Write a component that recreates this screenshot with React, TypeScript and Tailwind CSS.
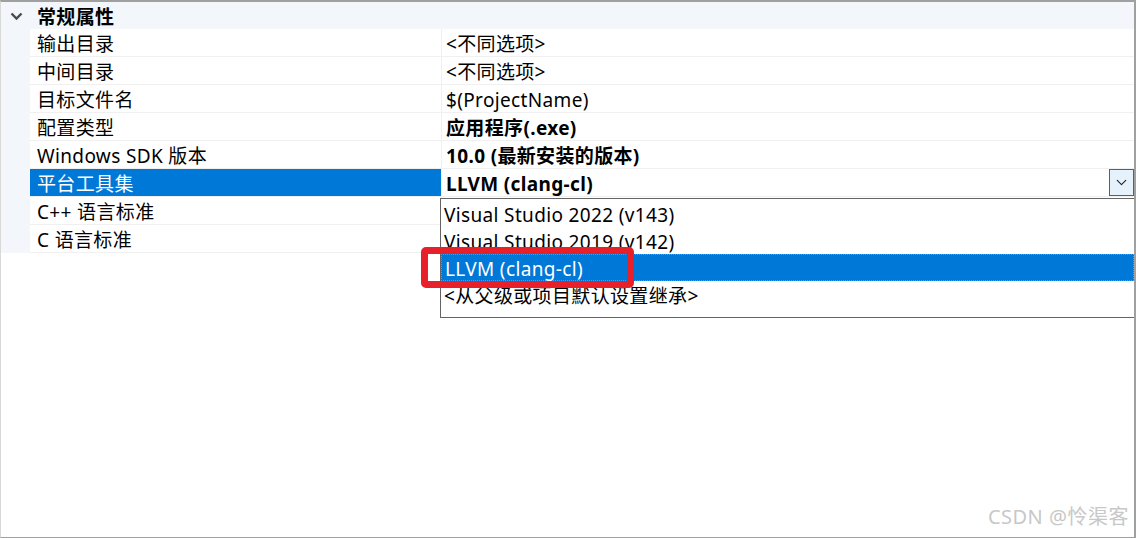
import { ChevronDown } from "lucide-react";

const rows = [
  { label: "输出目录", value: "<不同选项>", bold: false },
  { label: "中间目录", value: "<不同选项>", bold: false },
  { label: "目标文件名", value: "$(ProjectName)", bold: false },
  { label: "配置类型", value: "应用程序(.exe)", bold: true },
  { label: "Windows SDK 版本", value: "10.0 (最新安装的版本)", bold: true },
  { label: "平台工具集", value: "LLVM (clang-cl)", bold: true, selected: true },
  { label: "C++ 语言标准", value: "", bold: false },
  { label: "C 语言标准", value: "", bold: false },
];

const options = [
  "Visual Studio 2022 (v143)",
  "Visual Studio 2019 (v142)",
  "LLVM (clang-cl)",
  "<从父级或项目默认设置继承>",
];

export default function App() {
  return (
    <div
      className="relative w-[1136px] h-[538px] overflow-hidden bg-white border-t-2 border-l border-b border-r-2 border-t-[#a0a0a0] border-l-[#d8d8d8] border-b-[#a0a0a0] border-r-[#a0a0a0] text-[19px] tracking-[0.35px] text-black"
      style={{ fontFamily: '"Noto Sans", "Noto Sans CJK SC", sans-serif' }}
    >
      {/* Header */}
      <div className="flex items-center h-[27px] bg-[#f3f6fb]">
        <div className="w-[29px] flex justify-center">
          <svg width="13" height="9" viewBox="0 0 13 9" className="ml-[2px] mt-[2px]">
            <path d="M1.5 1.5 L6.5 6.5 L11.5 1.5" fill="none" stroke="#4a4a4a" strokeWidth="2.4" />
          </svg>
        </div>
        <span className="pl-[7px] pt-[3px] font-bold leading-none">常规属性</span>
      </div>

      {/* Property rows */}
      {rows.map((r) => (
        <div key={r.label} className="flex h-[28px]">
          <div className="w-[29px] shrink-0 bg-[#f3f6fb]" />
          <div
            className={`w-[411px] shrink-0 flex items-center pl-[7px] pt-[3px] border-b border-[#f0f0f0] ${
              r.selected ? "bg-[#0078d7] text-white border-[#0078d7]" : ""
            }`}
          >
            {r.label}
          </div>
          <div className="flex-1 flex items-center border-l border-b border-[#f0f0f0] pl-[4px]">
            <span className={`pt-[3px] ${r.bold ? "font-bold" : ""}`}>{r.value}</span>
            {r.selected && (
              <div className="ml-auto h-[27px] w-[25px] flex items-center justify-center bg-[#e5f1fb] border border-[#0078d7]">
                <ChevronDown size={17} strokeWidth={1.6} color="#222" />
              </div>
            )}
          </div>
        </div>
      ))}

      {/* Dropdown list */}
      <div className="absolute left-[439px] top-[196px] w-[695px] h-[120px] bg-white border border-[#646464] pt-[1px]">
        {options.map((o, i) => (
          <div
            key={o}
            className={`h-[27px] flex items-center pl-[3px] pt-[3px] ${
              i === 2 ? "bg-[#0078d7] text-white border border-dotted border-[#d08020]" : ""
            }`}
          >
            {o}
          </div>
        ))}
      </div>

      {/* Red annotation box */}
      <div className="absolute left-[420px] top-[245px] w-[213px] h-[41px] border-[7px] border-[#e8202a] rounded-[5px]" />

      {/* Watermark */}
      <div className="absolute right-[5px] bottom-[5px] text-[20px] tracking-[0.5px] text-[#c8c8c8]">
        CSDN @怜渠客
      </div>
    </div>
  );
}
